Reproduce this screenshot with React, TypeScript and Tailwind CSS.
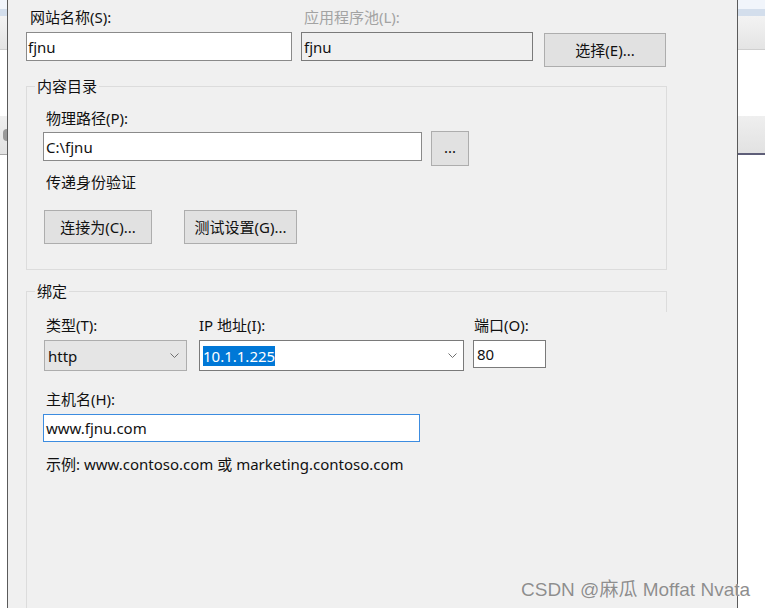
import type { ReactNode } from 'react'

const ui = "font-['Noto_Sans','Noto_Sans_CJK_SC',sans-serif] text-[15px] leading-[20px] text-[#111111]"

function BackWindow({ edge }: { edge: 'left' | 'right' }) {
  return (
    <div className="flex flex-col h-full">
      <div className="h-[9px] shrink-0 bg-[#f1f5fb]" />
      <div className="h-[7px] shrink-0 bg-[#d3deec]" />
      <div className="h-[34px] shrink-0 bg-linear-to-b from-[#f3f3f3] to-[#e4e4e4] border-b border-[#cfcfcf]" />
      <div className="h-[66px] shrink-0 bg-white" />
      <div
        className={
          edge === 'right'
            ? 'h-[39px] shrink-0 bg-linear-to-b from-[#efefef] to-[#e2e2e2] border-b-2 border-[#5e5e78]'
            : 'h-[39px] shrink-0 bg-linear-to-b from-[#efefef] to-[#e2e2e2] border-b border-[#a8a8a8] flex items-center justify-end'
        }
      >
        {edge === 'left' && <div className="w-[4px] h-[12px] bg-[#9a9a9a] rounded-l-sm" />}
      </div>
      <div className="flex-1 bg-white" />
    </div>
  )
}

function Chevron() {
  return (
    <svg width="9" height="5" viewBox="0 0 9 5" aria-hidden="true">
      <path d="M0.5 0.5 L4.5 4.5 L8.5 0.5" fill="none" stroke="#6f6f6f" strokeWidth="1" />
    </svg>
  )
}

function Button({ className, children }: { className: string; children: ReactNode }) {
  return (
    <div className={`flex items-center justify-center border border-[#adadad] bg-[#e1e1e1] ${className}`}>
      {children}
    </div>
  )
}

export default function App() {
  return (
    <div className={`w-[765px] h-[608px] overflow-hidden flex bg-white ${ui}`}>
      <div className="w-[7px] shrink-0">
        <BackWindow edge="left" />
      </div>

      <div className="relative w-[731px] shrink-0 h-full bg-[#f0f0f0] border-x border-[#5a5a5a]">
        {/* site name / app pool */}
        <div className="flex items-start pt-[7px] pl-[18px]">
          <div className="w-[266px]">
            <div className="ml-[4px] h-[20px]">网站名称(S):</div>
            <div className="mt-[5px] h-[29px] border border-[#8a8a8a] bg-white flex items-center pl-[1px]">fjnu</div>
          </div>
          <div className="w-[232px] ml-[9px]">
            <div className="ml-[3px] h-[20px] text-[#a3a3a3]">应用程序池(L):</div>
            <div className="mt-[5px] h-[29px] border border-[#7a7a7a] bg-[#f0f0f0] flex items-center pl-[2px]">fjnu</div>
          </div>
          <Button className="ml-[11px] mt-[26px] w-[122px] h-[34px]">选择(E)...</Button>
        </div>

        {/* content directory */}
        <fieldset className="mt-[9px] ml-[18px] w-[641px] border border-[#dcdcdc]">
          <legend className="ml-[8px] px-[2px] h-[20px]">内容目录</legend>
          <div className="pt-[12px] pl-[16px] pb-[25px]">
            <div className="ml-[3px] h-[20px]">物理路径(P):</div>
            <div className="mt-[3px] flex items-start">
              <div className="mt-[1px] w-[379px] h-[29px] border border-[#8a8a8a] bg-white flex items-center pl-[2px]">C:\fjnu</div>
              <Button className="ml-[9px] w-[38px] h-[35px] pb-[4px]">...</Button>
            </div>
            <div className="mt-[6px] ml-[3px] h-[20px]">传递身份验证</div>
            <div className="mt-[18px] ml-[1px] flex gap-[32px]">
              <Button className="w-[108px] h-[34px]">连接为(C)...</Button>
              <Button className="w-[113px] h-[34px]">测试设置(G)...</Button>
            </div>
          </div>
        </fieldset>

        {/* binding */}
        <fieldset className="mt-[11px] ml-[18px] w-[641px] h-[400px] border-l border-t border-[#dcdcdc]">
          <legend className="ml-[8px] px-[2px] h-[20px]">绑定</legend>
          <div className="relative pt-[14px] pl-[17px]">
            <span className="absolute right-0 top-[-10px] w-px h-[21px] bg-[#dcdcdc]" />
            <div className="flex items-start">
              <div className="w-[143px]">
                <div className="ml-[2px] h-[20px]">类型(T):</div>
                <div className="mt-[5px] h-[31px] border border-[#adadad] bg-[#e5e5e5] flex items-center justify-between pl-[3px] pr-[7px]">
                  <span>http</span>
                  <Chevron />
                </div>
              </div>
              <div className="w-[265px] ml-[12px]">
                <div className="h-[20px]">IP 地址(I):</div>
                <div className="mt-[5px] h-[31px] border border-[#7a7a7a] bg-white flex items-center justify-between pl-[3px] pr-[6px]">
                  <span className="bg-[#0078d7] text-white leading-[20px]">10.1.1.225</span>
                  <Chevron />
                </div>
              </div>
              <div className="w-[73px] ml-[9px]">
                <div className="ml-[1px] h-[20px]">端口(O):</div>
                <div className="mt-[5px] h-[28px] border border-[#7a7a7a] bg-white flex items-center pl-[3px]">80</div>
              </div>
            </div>
            <div className="mt-[18px] ml-[2px] h-[20px]">主机名(H):</div>
            <div className="mt-[5px] ml-[-1px] w-[377px] h-[28px] border border-[#3c8ce0] bg-white flex items-center pl-[2px]">www.fjnu.com</div>
            <div className="mt-[12px] ml-[2px] h-[20px]">示例: www.contoso.com 或 marketing.contoso.com</div>
          </div>
        </fieldset>
      </div>

      <div className="flex-1">
        <BackWindow edge="right" />
      </div>

      <div className="absolute left-[521px] top-[578px] font-['Liberation_Sans','Noto_Sans_CJK_SC',sans-serif] text-[19px] leading-[24px] text-[#8e8e8e] [text-shadow:0_0_1px_#ffffff]">
        CSDN @麻瓜 Moffat Nvata
      </div>
    </div>
  )
}
